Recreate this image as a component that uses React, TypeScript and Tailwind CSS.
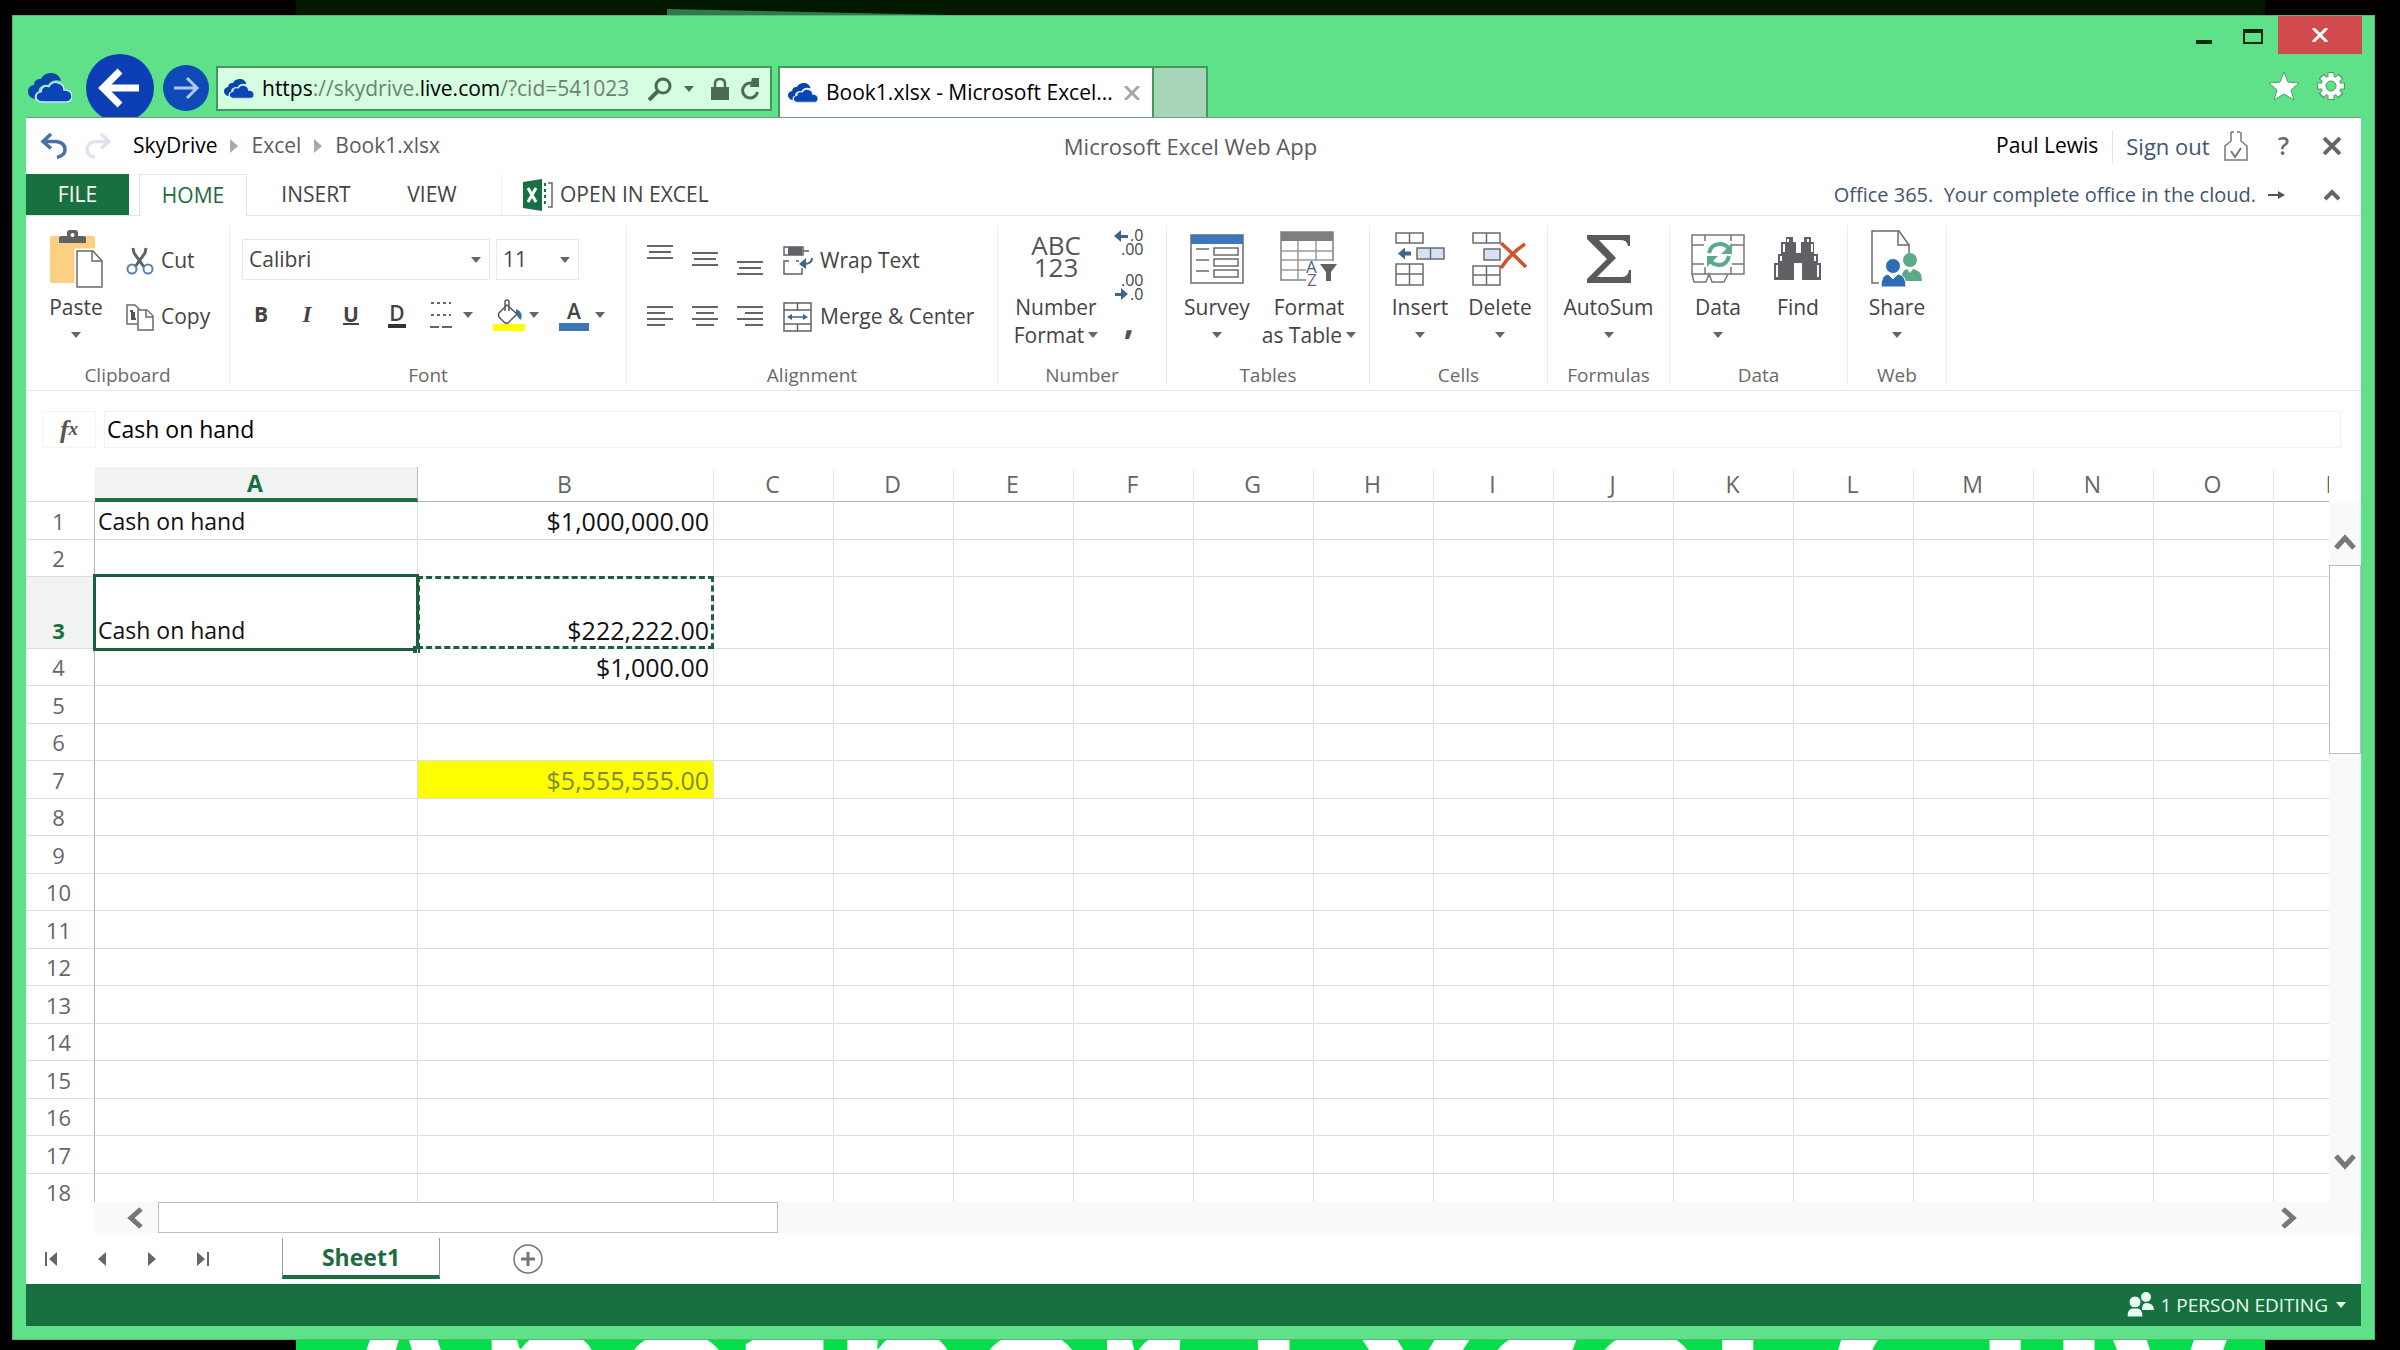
import { useState } from "react";
import type { ReactNode } from "react";

type IconProps = { className?: string };

const COLUMNS = ["A", "B", "C", "D", "E", "F", "G", "H", "I", "J", "K", "L", "M", "N", "O", "P"];
const ROWS = Array.from({ length: 18 }, (_, i) => i + 1);

const CELLS: Record<string, string> = {
  A1: "Cash on hand",
  B1: "$1,000,000.00",
  A3: "Cash on hand",
  B3: "$222,222.00",
  B4: "$1,000.00",
  B7: "$5,555,555.00",
};

function rowHeight(row: number) {
  if (row === 3) return "h-[72px]";
  return row === 1 || (row > 3 && row % 2 === 1) ? "h-[38px]" : "h-[37px]";
}

function columnWidth(column: string) {
  if (column === "A") return "w-[323px]";
  if (column === "B") return "w-[296px]";
  return "w-[120px]";
}

/* ---------- icons ---------- */

function CloudIcon({ className }: IconProps) {
  return (
    <svg viewBox="0 0 44 30" preserveAspectRatio="none" className={className}>
      <path
        d="M7 26C2 25 0 22 0 18.500C0 15 2 12.500 6 12C6 8 9 5.500 13 6C15 2 19 0 23 0C28 0 32 3 33 8C28 6 22 8 20 12C14 11 10 15 10.500 19C7 20 6 23 7 26Z"
        fill="#0a45a8"
      />
      <path
        d="M15 29C10.500 29 8 27 8 24C8 21 10 19 13 18.700C13 14 17 12 21 13.500C23 9.500 27 8.500 31 10C34 11 36 14 36 17C41 17 44 19.500 44 23.500C44 27 41 29 38 29Z"
        fill="#0a45b5"
        stroke="#c9e6ff"
        strokeWidth="1.500"
      />
    </svg>
  );
}

function Caret({ className = "text-[#666]" }: IconProps) {
  return (
    <svg viewBox="0 0 10 6" className={`h-[6px] w-[10px] shrink-0 ${className}`}>
      <path d="M0 0h10L5 6z" fill="currentColor" />
    </svg>
  );
}

function PasteIcon() {
  return (
    <svg viewBox="0 0 54 58" className="h-[58px] w-[54px]">
      <rect x="1" y="6" width="45" height="47" rx="2" fill="#fbd083" />
      <path d="M10 13V8q0-2 3-2h5V3q0-3 3-3h5q3 0 3 3v3h5q3 0 3 2v5z" fill="#5f6165" />
      <circle cx="23.500" cy="5" r="2" fill="#fff" />
      <path d="M28 21h17l8 10v26H28z" fill="#fff" stroke="#fff" strokeWidth="5" />
      <path d="M28 21h16l9 10v26H28z" fill="#fff" stroke="#6b6b6b" strokeWidth="1.500" />
      <path d="M43 21v10h10" fill="none" stroke="#6b6b6b" strokeWidth="1.500" />
    </svg>
  );
}

function CutIcon() {
  return (
    <svg viewBox="0 0 28 28" className="h-[28px] w-[28px]" fill="none">
      <path d="M7 1L8 6L18 20M20 1L19 6L9 20" stroke="#5f6165" strokeWidth="3" />
      <circle cx="6" cy="22" r="4.500" stroke="#5a80a8" strokeWidth="2" />
      <circle cx="22" cy="22" r="4.500" stroke="#5a80a8" strokeWidth="2" />
    </svg>
  );
}

function CopyIcon() {
  return (
    <svg viewBox="0 0 28 28" className="h-[28px] w-[28px]" fill="#fff" stroke="#6b6b6b" strokeWidth="1.500">
      <path d="M1 2h8l4 4v15H1z" />
      <path d="M4 8h2v8h4M8 9v6" stroke="#555" strokeWidth="2" />
      <path d="M12 7h9l6 6v14H12z" />
      <path d="M20 7v7h7" />
    </svg>
  );
}

function BordersIcon() {
  return (
    <svg viewBox="0 0 22 28" className="h-[28px] w-[22px]" fill="none" stroke="#666" strokeWidth="2">
      <path d="M1 2h20M1 14h20" strokeDasharray="3 3" />
      <path d="M0 26h9M12 26h10" />
    </svg>
  );
}

function FillIcon() {
  return (
    <svg viewBox="0 0 32 32" className="h-[32px] w-[32px]">
      <path d="M23 10q8 3 5 11q-3-2-5-6z" fill="#3d6fa8" />
      <path d="M14 6l10 9-9 9q-2 1-4-1l-5-5q-1-2 0-4z" fill="#fff" stroke="#555" strokeWidth="1.500" />
      <path d="M12 12V3q0-2 2-2t2 2v9" fill="none" stroke="#555" strokeWidth="1.500" />
      <rect x="0" y="25" width="32" height="7" fill="#ffff00" />
    </svg>
  );
}

function LinesIcon({ lines }: { lines: [number, number][] }) {
  return (
    <svg viewBox="0 0 26 22" className="h-[22px] w-[26px]" stroke="#666" strokeWidth="2">
      {lines.map(([from, to], i) => (
        <path key={i} d={`M${from} ${2 + i * 6}H${to}`} />
      ))}
    </svg>
  );
}

function WrapIcon() {
  return (
    <svg viewBox="0 0 30 30" className="h-[30px] w-[30px]" fill="none">
      <rect x="1" y="1" width="19" height="8" stroke="#5f6165" strokeWidth="1.500" />
      <rect x="5" y="1" width="14" height="8" fill="#5f6165" />
      <path d="M20 5h6" stroke="#5f6165" strokeWidth="1.500" />
      <path d="M6 15H1v13h18v-6M13 15h3" stroke="#5f6165" strokeWidth="1.500" />
      <path d="M29 12q0 6-8 6" stroke="#3f6688" strokeWidth="2" />
      <path d="M16 18l7-6v11z" fill="#3f6688" />
    </svg>
  );
}

function MergeIcon() {
  return (
    <svg viewBox="0 0 30 30" className="h-[30px] w-[30px]" fill="none" stroke="#5f6165" strokeWidth="1.500">
      <path d="M1 1h27v28H1zM1 8h27M1 22h27M14.500 1v7M14.500 22v7" />
      <path d="M6 15h17" stroke="#3f6688" />
      <path d="M4 15l5-3v6zM25 15l-5-3v6z" fill="#3f6688" stroke="none" />
    </svg>
  );
}

function DecimalIcon({ increase }: { increase: boolean }) {
  return (
    <svg
      viewBox="0 0 30 28"
      className="h-[28px] w-[30px] font-['Open_Sans',sans-serif] text-[16px]"
      fill="#444"
    >
      <text x="16" y={increase ? 12 : 27}>.0</text>
      <text x="7" y={increase ? 26 : 13}>.00</text>
      {increase ? (
        <path d="M0 7l7-6v5h7v3H7v4z" fill="#3f6688" />
      ) : (
        <path d="M14 21l-7-6v5H1v3h6v4z" fill="#3f6688" />
      )}
    </svg>
  );
}

function SurveyIcon() {
  return (
    <svg viewBox="0 0 54 50" className="h-[50px] w-[54px]" fill="#fff" stroke="#6b6b6b" strokeWidth="1.500">
      <rect x="1" y="1" width="52" height="48" />
      <rect x="1" y="1" width="52" height="9" fill="#3c76bd" stroke="none" />
      {[14, 25, 36].map((y) => (
        <g key={y}>
          <path d={`M6 ${y + 1}h13`} />
          <rect x="24" y={y} width="24" height="7" />
        </g>
      ))}
    </svg>
  );
}

function FormatTableIcon() {
  return (
    <svg viewBox="0 0 58 56" className="h-[56px] w-[58px]" fill="none">
      <path d="M1 1h52v48H1z" fill="#fff" stroke="#808080" strokeWidth="1.500" />
      <path d="M18 10v39M36 10v20M1 20h52M1 29h52M1 39h30" stroke="#9a9a9a" strokeWidth="1.500" />
      <path d="M1 1h52v9H1z" fill="#7f7f7f" />
      <path d="M26 30h32v26H26z" fill="#fff" />
      <path d="M40 33h17l-6 8v9h-5v-9z" fill="#5f6165" />
      <text x="26" y="42" className="font-['Open_Sans',sans-serif] text-[17px]" fill="#3f6688">A</text>
      <text x="27" y="55" className="font-['Open_Sans',sans-serif] text-[17px]" fill="#80608a">Z</text>
    </svg>
  );
}

function InsertCellsIcon() {
  return (
    <svg viewBox="0 0 50 54" className="h-[54px] w-[50px]" fill="#fff" stroke="#6b6b6b" strokeWidth="1.500">
      <path d="M1 1h27v10H1zM14.500 1v10" />
      <path d="M1 32h27v21H1zM14.500 32v21M1 42h27" />
      <path d="M22 16h27v11H22zM35.500 16v11" fill="#d5e2f5" />
      <path d="M3 21.500l7-6v4h6v4h-6v4z" fill="#3f6688" stroke="none" />
    </svg>
  );
}

function DeleteCellsIcon() {
  return (
    <svg viewBox="0 0 56 54" className="h-[54px] w-[56px]" fill="#fff" stroke="#6b6b6b" strokeWidth="1.500">
      <path d="M1 1h27v10H1zM14.500 1v10" />
      <path d="M1 34h27v19H1zM14.500 34v19M1 43h27" />
      <path d="M12 17h16v11H12z" fill="#d5e2f5" />
      <path d="M29 11q10 9 25 24M53 12Q38 22 29 36" fill="none" stroke="#d2512e" strokeWidth="3.500" />
    </svg>
  );
}

function SigmaIcon() {
  return (
    <svg viewBox="0 0 46 50" className="h-[50px] w-[46px]">
      <path d="M1 1h43v11h-2q-1-6-7-6H13l17 18L11 43h25q6 0 7-7h2v13H1v-4l20-20L1 5z" fill="#5a5a5c" />
    </svg>
  );
}

function DataIcon() {
  return (
    <svg viewBox="0 0 54 50" className="h-[50px] w-[54px]" fill="none" stroke="#777" strokeWidth="1.500">
      <path d="M1 1h52v39H1zM1 11h12M1 30h12M41 11h12M41 30h12M14 1v6M40 1v6M14 33v7M40 33v7" />
      <path d="M1 40l2 8h12l3-8 3 8h12l4-8" />
      <path d="M18 19q2-9 11-9 6 0 9 5M38 22q-2 9-10 9-6 0-9-5" stroke="#5ea98a" strokeWidth="4" />
      <path d="M41 9v11H30zM16 33V22h11z" fill="#5ea98a" stroke="none" />
    </svg>
  );
}

function FindIcon() {
  return (
    <svg viewBox="0 0 50 46" className="h-[46px] w-[50px]" fill="#5f6165">
      <path d="M13 1h7v5h3v11h5V6h3V1h7v5h3v12h4v9h3v17H29V27h-8v17H1V27h4v-9h3V6h5z" />
      <path d="M4 29v12M8 20v5M45 29v12M42 20v5M11 8v8M39 8v8M15 3v3M35 3v3" stroke="#fff" strokeWidth="2" />
    </svg>
  );
}

function ShareIcon() {
  return (
    <svg viewBox="0 0 52 58" className="h-[58px] w-[52px]">
      <path d="M8 53H1V1h27l10 14v8" fill="#fff" stroke="#6b6b6b" strokeWidth="1.500" />
      <path d="M27 1v14h11" fill="none" stroke="#6b6b6b" strokeWidth="1.500" />
      <circle cx="39" cy="30" r="7" fill="#5ea98a" />
      <path d="M31 51q-1-11 5-12l3 4 3-4q9 1 9 12z" fill="#5ea98a" />
      <circle cx="22" cy="36" r="7.500" fill="#2f6cb5" stroke="#fff" />
      <path d="M10 57q0-12 7-13l5 5 5-5q8 1 8 13z" fill="#2f6cb5" stroke="#fff" />
    </svg>
  );
}

function Chevron({ className = "" }: IconProps) {
  return (
    <svg viewBox="0 0 22 16" className={`h-[16px] w-[22px] ${className}`} fill="none">
      <path d="M2 14l9-10 9 10" stroke="#777" strokeWidth="5" />
    </svg>
  );
}

function PeopleIcon() {
  return (
    <svg viewBox="0 0 28 26" className="h-[26px] w-[28px]" fill="#e6fff0">
      <circle cx="19" cy="5" r="5" />
      <path d="M15 18q0-7 4-7 8 0 8 7z" />
      <circle cx="8" cy="10" r="6" stroke="#187040" />
      <path d="M0 25q0-8 5-9h6q5 1 5 9z" stroke="#187040" />
    </svg>
  );
}

/* ---------- browser chrome ---------- */

function TitleBar() {
  return (
    <header className="flex h-[101px] flex-col pr-3 pl-[13px]">
      <div className="flex h-[38px] items-start justify-end">
        <button aria-label="Minimize" className="flex h-[28px] w-[48px] items-end justify-center">
          <span className="h-[4px] w-[16px] bg-[#062b0c]" />
        </button>
        <button aria-label="Maximize" className="flex h-[28px] w-[50px] items-end justify-center">
          <span className="h-[15px] w-[20px] border-2 border-t-4 border-[#062b0c]" />
        </button>
        <button aria-label="Close" className="flex h-[38px] w-[84px] items-center justify-center bg-[#d14b4d]">
          <svg viewBox="0 0 16 14" className="h-[14px] w-[16px]" stroke="#fff" strokeWidth="3">
            <path d="M1 0l14 14M15 0L1 14" />
          </svg>
        </button>
      </div>
      <div className="flex flex-1 items-end">
        <div className="h-[63px] overflow-hidden">
          <div className="flex h-[68px] items-center">
            <CloudIcon className="ml-[2px] h-[30px] w-[44px]" />
            <button aria-label="Back" className="ml-[14px] h-[68px] w-[68px] shrink-0">
              <svg viewBox="0 0 68 68" className="h-full w-full">
                <circle cx="34" cy="34" r="34" fill="#0b3fb3" />
                <path d="M53 34H18M34 17L17 34l17 17" fill="none" stroke="#fff" strokeWidth="7" />
              </svg>
            </button>
            <button aria-label="Forward" className="ml-2 h-[48px] w-[48px] shrink-0">
              <svg viewBox="0 0 48 48" className="h-full w-full">
                <circle cx="24" cy="24" r="23" fill="#0f49b5" />
                <path d="M12 24h23M25 14l10 10-10 10" fill="none" stroke="#a9c8f5" strokeWidth="3" />
              </svg>
            </button>
          </div>
        </div>
        <div className="mb-[6px] ml-[6px] flex h-[45px] w-[556px] items-center border-2 border-[#45985c] bg-[#d5fde0] px-[6px]">
          <CloudIcon className="h-[20px] w-[30px]" />
          <span className="ml-2 flex-1 text-[21px] whitespace-nowrap text-[#6d8273]">
            <span className="text-black">https</span>://skydrive.<span className="text-black">live.com</span>
            /?cid=541023
          </span>
          <button aria-label="Search" className="ml-2">
            <svg viewBox="0 0 24 24" className="h-[24px] w-[24px]" fill="none" stroke="#4c6b54" strokeWidth="3">
              <circle cx="15" cy="9" r="7" />
              <path d="M10 14L1 23" strokeWidth="4" />
            </svg>
          </button>
          <button aria-label="Show address list" className="ml-3">
            <Caret className="text-[#4c6b54]" />
          </button>
          <svg viewBox="0 0 20 22" className="ml-[16px] h-[22px] w-[20px]">
            <path d="M5 10V6q0-5 5-5t5 5v4" fill="none" stroke="#4c6b54" strokeWidth="2.500" />
            <rect x="1" y="9" width="18" height="13" fill="#4c6b54" />
          </svg>
          <button aria-label="Refresh" className="mr-1 ml-[10px]">
            <svg viewBox="0 0 20 22" className="h-[22px] w-[20px]">
              <path d="M13 5.500A7.500 7.500 0 1 0 17.500 14" fill="none" stroke="#4c6b54" strokeWidth="3" />
              <path d="M12 0h7v9h-9z" fill="#4c6b54" />
            </svg>
          </button>
        </div>
        <div className="ml-[6px] flex h-[51px] w-[376px] items-center border-2 border-b-0 border-[#45985c] bg-white px-2">
          <CloudIcon className="h-[20px] w-[30px]" />
          <span className="ml-2 flex-1 text-[21px] whitespace-nowrap text-black">Book1.xlsx - Microsoft Excel...</span>
          <button aria-label="Close tab" className="mr-1">
            <svg viewBox="0 0 16 14" className="h-[14px] w-[16px]" stroke="#aaa3a8" strokeWidth="3">
              <path d="M1 0l14 14M15 0L1 14" />
            </svg>
          </button>
        </div>
        <button aria-label="New tab" className="h-[51px] w-[54px] border-2 border-b-0 border-l-0 border-[#45985c] bg-[#a6d5b7]" />
        <div className="mr-4 ml-auto flex h-[62px] items-center gap-4">
          <button aria-label="Favorites">
            <svg viewBox="0 0 32 30" className="h-[30px] w-[32px]">
              <path d="M16 1l4 10 11 1-8 7 3 10-10-6-10 6 3-10-8-7 11-1z" fill="#fff" stroke="#4e9c66" />
            </svg>
          </button>
          <button aria-label="Tools">
            <svg viewBox="0 0 30 30" className="h-[30px] w-[30px]">
              <g stroke="#4e9c66" strokeWidth="7">
                <path d="M15 1v28M1 15h28M5 5l20 20M25 5L5 25" />
              </g>
              <g stroke="#fff" strokeWidth="5">
                <path d="M15 2v26M2 15h26M6 6l18 18M24 6L6 24" />
              </g>
              <circle cx="15" cy="15" r="7" fill="#5ee188" stroke="#fff" strokeWidth="5" />
              <circle cx="15" cy="15" r="5" fill="#5ee188" stroke="#4e9c66" />
            </svg>
          </button>
        </div>
      </div>
    </header>
  );
}

function Breadcrumbs() {
  return (
    <div className="flex h-[56px] items-center pl-[14px] text-[21px] text-[#5c5c5c]">
      <div className="flex flex-1 items-center">
        <button aria-label="Undo">
          <svg viewBox="0 0 28 26" className="h-[26px] w-[28px]" fill="none" stroke="#4a6fa5" strokeWidth="3.500">
            <path d="M11 1L3 8.500l8 7M4 8.500h12q9 1 9 8 0 6-8 8" />
          </svg>
        </button>
        <button aria-label="Redo" className="ml-4">
          <svg viewBox="0 0 28 26" className="h-[26px] w-[28px]" fill="none" stroke="#dfe3ef" strokeWidth="3.500">
            <path d="M17 1l8 7.500-8 7M24 8.500H12q-9 1-9 8 0 6 8 8" />
          </svg>
        </button>
        <nav className="ml-[21px] flex items-center gap-[13px]">
          <a href="#skydrive" className="text-black">SkyDrive</a>
          <svg viewBox="0 0 8 14" className="h-[14px] w-[8px]" fill="#aaa"><path d="M0 0l8 7-8 7z" /></svg>
          <a href="#excel">Excel</a>
          <svg viewBox="0 0 8 14" className="h-[14px] w-[8px]" fill="#aaa"><path d="M0 0l8 7-8 7z" /></svg>
          <a href="#book">Book1.xlsx</a>
        </nav>
      </div>
      <h1 className="text-[22px]">Microsoft Excel Web App</h1>
      <div className="flex flex-1 items-center justify-end pr-5">
        <span className="text-black">Paul Lewis</span>
        <a href="#signout" className="ml-[14px] border-l border-[#e3e3e3] pl-[13px] text-[22px] text-[#44546f]">Sign out</a>
        <svg viewBox="0 0 24 30" className="ml-[14px] h-[30px] w-[24px]" fill="none" stroke="#777" strokeWidth="1.500">
          <path d="M7 1v9l-6 5v14h22V15l-6-5V1" />
          <path d="M7 1h10" strokeDasharray="3 3" />
          <path d="M7 20l4 6 6-9" strokeWidth="2" />
        </svg>
        <button aria-label="Help" className="ml-[30px] text-[25px] font-semibold text-[#6b6b6b]">?</button>
        <button aria-label="Close workbook" className="ml-[34px]">
          <svg viewBox="0 0 18 18" className="h-[18px] w-[18px]" stroke="#666" strokeWidth="4">
            <path d="M1 1l16 16M17 1L1 17" />
          </svg>
        </button>
      </div>
    </div>
  );
}

function RibbonTabs() {
  return (
    <div className="flex h-[42px] items-stretch border-b border-[#e4e4e4] text-[21px] text-[#444]">
      <button className="w-[103px] bg-[#187040] pt-px text-white">FILE</button>
      <button className="-mb-px ml-[10px] w-[108px] border border-b-0 border-[#e4e4e4] bg-white text-[#1d6b41]">HOME</button>
      <button className="w-[138px] pt-px">INSERT</button>
      <button className="w-[94px] pt-px">VIEW</button>
      <button className="ml-[22px] flex items-center border-l border-[#ededed] pt-px pl-[21px]">
        <svg viewBox="0 0 32 32" className="mr-[5px] h-[32px] w-[32px]">
          <path d="M0 3l19-3v32L0 29z" fill="#187040" />
          <path d="M5 9l8 14M13 9L5 23" stroke="#fff" strokeWidth="3" />
          <path d="M22 4v24" stroke="#187040" strokeWidth="2" strokeDasharray="3 3" />
          <path d="M25 4h4v24h-4" fill="none" stroke="#666" strokeWidth="1.500" />
        </svg>
        OPEN IN EXCEL
      </button>
      <a href="#office365" className="ml-auto self-center text-[20px] whitespace-pre text-[#44546f]">
        {"Office 365.  Your complete office in the cloud."}
      </a>
      <svg viewBox="0 0 18 10" className="ml-3 h-[10px] w-[18px] self-center" fill="#555">
        <path d="M0 4h10V1l7 4-7 4V6H0z" />
      </svg>
      <button aria-label="Collapse ribbon" className="mr-[21px] ml-[38px]">
        <svg viewBox="0 0 16 12" className="h-[12px] w-[16px]" fill="none">
          <path d="M1 10l7-7 7 7" stroke="#666" strokeWidth="4" />
        </svg>
      </button>
    </div>
  );
}

/* ---------- ribbon ---------- */

function RibbonGroup({ label, className, children }: { label: string; className: string; children: ReactNode }) {
  return (
    <section className={`flex h-[160px] shrink-0 flex-col border-r border-[#ececec] ${className}`}>
      <div className="flex flex-1">{children}</div>
      <h2 className="text-center text-[19px] leading-[20px] text-[#6a6a6a]">{label}</h2>
    </section>
  );
}

type BigButtonProps = {
  icon: ReactNode;
  label: string;
  secondLine?: string;
  menu?: boolean;
  className?: string;
};

function BigButton({ icon, label, secondLine, menu = true, className = "w-[80px]" }: BigButtonProps) {
  return (
    <button className={`flex h-[124px] shrink-0 flex-col items-center text-[21px] leading-[28px] text-[#444] ${className}`}>
      <span className="flex h-[68px] items-center">{icon}</span>
      <span>{label}</span>
      <span className="flex h-[28px] items-center gap-1 whitespace-nowrap">
        {secondLine}
        {menu && <Caret />}
      </span>
    </button>
  );
}

function SmallButton({ icon, label }: { icon: ReactNode; label: string }) {
  return (
    <button className="flex h-[56px] items-center gap-[7px] text-[21px] whitespace-nowrap text-[#444]">
      {icon}
      {label}
    </button>
  );
}

function RibbonSelect({ label, options, className }: { label: string; options: string[]; className: string }) {
  return (
    <div className={`relative h-[41px] border border-[#e8e8e8] ${className}`}>
      <select aria-label={label} className="h-full w-full appearance-none bg-transparent pl-[6px] text-[21px] text-[#444]">
        {options.map((o) => (
          <option key={o}>{o}</option>
        ))}
      </select>
      <span className="pointer-events-none absolute inset-y-0 right-[8px] flex items-center">
        <Caret />
      </span>
    </div>
  );
}

const FULL: [number, number] = [0, 26];

function Ribbon() {
  return (
    <div className="flex h-[175px] border-b border-[#e8e8e8] pt-[9px]">
      <RibbonGroup label="Clipboard" className="w-[204px]">
        <BigButton icon={<PasteIcon />} label="Paste" className="ml-[14px] w-[72px]" />
        <div className="mt-2 ml-[14px]">
          <SmallButton icon={<CutIcon />} label="Cut" />
          <SmallButton icon={<CopyIcon />} label="Copy" />
        </div>
      </RibbonGroup>

      <RibbonGroup label="Font" className="w-[397px]">
        <div className="ml-3 flex flex-col pt-[14px]">
          <div className="flex gap-[6px]">
            <RibbonSelect label="Font name" options={["Calibri", "Arial"]} className="w-[248px]" />
            <RibbonSelect label="Font size" options={["11", "12"]} className="w-[83px]" />
          </div>
          <div className="mt-[13px] flex h-[44px] items-center text-[21px] text-[#444]">
            <button aria-label="Bold" className="w-[38px] font-bold">B</button>
            <button aria-label="Italic" className="ml-2 w-[38px] font-['Liberation_Serif',serif] text-[23px] font-bold italic">I</button>
            <button aria-label="Underline" className="ml-1 w-[42px] font-bold underline decoration-2">U</button>
            <button aria-label="Double underline" className="ml-1 flex w-[42px] justify-center">
              <span className="border-b-4 border-[#333] px-px leading-[22px] font-semibold">D</span>
            </button>
            <button aria-label="Borders" className="ml-3 flex items-center gap-[11px]">
              <BordersIcon />
              <Caret />
            </button>
            <button aria-label="Fill color" className="ml-[20px] flex items-center gap-1">
              <FillIcon />
              <Caret />
            </button>
            <button aria-label="Font color" className="ml-[20px] flex items-center gap-[6px]">
              <span className="w-[30px] border-b-8 border-[#3c76b5] leading-[24px] font-semibold">A</span>
              <Caret />
            </button>
          </div>
        </div>
      </RibbonGroup>

      <RibbonGroup label="Alignment" className="w-[371px]">
        <div className="ml-5 flex flex-col pt-[7px]">
          <div className="flex h-[56px] gap-[19px]">
            <button aria-label="Top align" className="self-start pt-[12px]"><LinesIcon lines={[FULL, [2, 24], FULL]} /></button>
            <button aria-label="Middle align" className="pt-[4px]"><LinesIcon lines={[FULL, [2, 24], FULL]} /></button>
            <button aria-label="Bottom align" className="self-end pb-[6px]"><LinesIcon lines={[FULL, [2, 24], FULL]} /></button>
          </div>
          <div className="flex h-[56px] items-center gap-[19px]">
            <button aria-label="Align left"><LinesIcon lines={[FULL, [0, 18], FULL, [0, 18]]} /></button>
            <button aria-label="Center"><LinesIcon lines={[FULL, [4, 22], FULL, [4, 22]]} /></button>
            <button aria-label="Align right"><LinesIcon lines={[FULL, [8, 26], FULL, [8, 26]]} /></button>
          </div>
        </div>
        <div className="ml-5 pt-2">
          <SmallButton icon={<WrapIcon />} label="Wrap Text" />
          <SmallButton icon={<MergeIcon />} label="Merge & Center" />
        </div>
      </RibbonGroup>

      <RibbonGroup label="Number" className="w-[169px]">
        <BigButton
          icon={
            <span className="flex flex-col pb-[6px] text-center text-[26px] leading-[22px] text-[#555]">
              <span>ABC</span>
              <span>123</span>
            </span>
          }
          label="Number"
          secondLine="Format"
          className="ml-[10px] w-[96px]"
        />
        <div className="ml-[10px] flex flex-col items-center pt-[4px]">
          <button aria-label="Increase decimal"><DecimalIcon increase /></button>
          <button aria-label="Decrease decimal" className="mt-[16px]"><DecimalIcon increase={false} /></button>
          <button aria-label="Comma style" className="mt-[6px] text-[36px] leading-[28px] font-bold text-[#555]">,</button>
        </div>
      </RibbonGroup>

      <RibbonGroup label="Tables" className="w-[203px]">
        <BigButton icon={<SurveyIcon />} label="Survey" className="ml-[10px] w-[80px]" />
        <BigButton icon={<FormatTableIcon />} label="Format" secondLine="as Table" className="w-[104px]" />
      </RibbonGroup>

      <RibbonGroup label="Cells" className="w-[178px]">
        <BigButton icon={<InsertCellsIcon />} label="Insert" className="ml-[10px] w-[80px]" />
        <BigButton icon={<DeleteCellsIcon />} label="Delete" />
      </RibbonGroup>

      <RibbonGroup label="Formulas" className="w-[122px]">
        <BigButton icon={<SigmaIcon />} label="AutoSum" className="w-full" />
      </RibbonGroup>

      <RibbonGroup label="Data" className="w-[178px]">
        <BigButton icon={<DataIcon />} label="Data" className="ml-[8px] w-[80px]" />
        <BigButton icon={<FindIcon />} label="Find" menu={false} />
      </RibbonGroup>

      <RibbonGroup label="Web" className="w-[99px]">
        <BigButton icon={<ShareIcon />} label="Share" className="w-full" />
      </RibbonGroup>
    </div>
  );
}

/* ---------- sheet ---------- */

function FormulaBar({ value, onChange }: { value: string; onChange: (value: string) => void }) {
  return (
    <div className="flex h-[76px] items-center gap-2 pr-[20px] pl-4 text-[23px]">
      <label
        htmlFor="formula"
        className="flex h-[37px] w-[54px] items-center justify-center border border-[#f4f4f4] font-['Liberation_Serif',serif] text-[26px] font-bold text-[#555] italic"
      >
        f<span className="text-[19px]">x</span>
      </label>
      <input
        id="formula"
        value={value}
        onChange={(e) => onChange(e.target.value)}
        className="h-[37px] flex-1 border border-[#f1f1f1] pl-[2px] text-black outline-none"
      />
    </div>
  );
}

function Cell({ id, value }: { id: string; value?: string }) {
  const base = "relative border-r border-b border-[#dedede] p-0 pr-1 pl-[3px] align-bottom leading-[36px] whitespace-nowrap";
  if (id === "A3") {
    return (
      <td className={base}>
        {value}
        <span className="absolute -inset-x-[2px] -inset-y-[3px] border-[3px] border-[#1c5f3d]" />
        <span className="absolute -right-[3px] -bottom-[5px] h-[7px] w-[7px] bg-[#1c5f3d]" />
      </td>
    );
  }
  if (id === "B3") {
    return (
      <td className={`${base} text-right text-[25px]`}>
        {value}
        <span className="absolute -inset-px border-[3px] border-dashed border-[#1c5f3d]" />
      </td>
    );
  }
  if (id === "B7") {
    return <td className={`${base} bg-[#ffff00] text-right text-[25px] text-[#7f8a3c]`}>{value}</td>;
  }
  return <td className={`${base} ${id.startsWith("B") ? "text-right text-[25px]" : ""}`}>{value}</td>;
}

function Sheet({ cells }: { cells: Record<string, string> }) {
  return (
    <div className="min-w-0 flex-1 overflow-hidden">
      <table className="w-[2368px] table-fixed border-separate border-spacing-0 text-[23px] text-[#111]">
        <thead>
          <tr className="h-[35px] text-[#666]">
            <th aria-label="Select all" className="w-[69px] border-b border-[#dedede] p-0" />
            {COLUMNS.map((column) => (
              <th
                key={column}
                scope="col"
                className={`p-0 pr-[2px] text-[23px] leading-[30px] ${columnWidth(column)} ${
                  column === "A"
                    ? "border-r border-b-4 border-r-[#bbb] border-b-[#187040] bg-[#f1f2f2] font-bold text-[#187040]"
                    : "border-r border-b border-r-[#ececec] border-b-[#b5b5b5] font-normal"
                }`}
              >
                {column}
              </th>
            ))}
          </tr>
        </thead>
        <tbody>
          {ROWS.map((row) => (
            <tr key={row} className={rowHeight(row)}>
              <th
                scope="row"
                className={`border-r border-b border-r-[#b5b5b5] border-b-[#dedede] p-0 pr-[3px] align-bottom text-[22px] leading-[36px] ${
                  row === 3 ? "bg-[#f1f2f2] font-bold text-[#187040]" : "font-normal text-[#666]"
                }`}
              >
                {row}
              </th>
              {COLUMNS.map((column) => (
                <Cell key={column} id={`${column}${row}`} value={cells[`${column}${row}`]} />
              ))}
            </tr>
          ))}
        </tbody>
      </table>
    </div>
  );
}

function VerticalScrollbar() {
  return (
    <div className="mt-[36px] flex w-[32px] shrink-0 flex-col items-center bg-[#f8f9f9]">
      <button aria-label="Scroll up" className="flex h-[62px] items-end pb-[15px]"><Chevron /></button>
      <div className="h-[189px] w-full border border-[#bdbdbd] bg-white" />
      <button aria-label="Scroll down" className="mt-auto flex h-[48px]"><Chevron className="rotate-180" /></button>
    </div>
  );
}

function HorizontalScrollbar() {
  return (
    <div className="ml-[69px] flex h-[31px] items-center bg-[#f9f9f9]">
      <button aria-label="Scroll left" className="flex w-[63px] justify-end pr-3"><Chevron className="-rotate-90" /></button>
      <div className="h-full w-[620px] border border-[#bdbdbd] bg-white" />
      <button aria-label="Scroll right" className="mr-[61px] ml-auto"><Chevron className="rotate-90" /></button>
    </div>
  );
}

function SheetTabs() {
  return (
    <div className="flex h-[51px] items-center pl-[19px]">
      <div className="flex items-center gap-[40px]">
        <button aria-label="First sheet">
          <svg viewBox="0 0 12 14" className="h-[14px] w-[12px]" fill="#666"><path d="M0 0h2v14H0zM12 0v14L4 7z" /></svg>
        </button>
        <button aria-label="Previous sheet">
          <svg viewBox="0 0 10 14" className="h-[14px] w-[10px]" fill="#666"><path d="M9 0v14L1 7z" /></svg>
        </button>
        <button aria-label="Next sheet">
          <svg viewBox="0 0 10 14" className="h-[14px] w-[10px]" fill="#666"><path d="M1 0v14l8-7z" /></svg>
        </button>
        <button aria-label="Last sheet">
          <svg viewBox="0 0 12 14" className="h-[14px] w-[12px]" fill="#666"><path d="M10 0h2v14h-2zM0 0v14l8-7z" /></svg>
        </button>
      </div>
      <button className="ml-[73px] h-[41px] w-[158px] border-x border-b-4 border-x-[#999] border-b-[#187040] text-[23px] leading-[36px] font-bold text-[#1d6b41]">
        Sheet1
      </button>
      <button aria-label="New sheet" className="ml-[73px]">
        <svg viewBox="0 0 30 30" className="h-[30px] w-[30px]" fill="none" stroke="#777">
          <circle cx="15" cy="15" r="14" strokeWidth="1.500" />
          <path d="M15 8v14M8 15h14" strokeWidth="3" />
        </svg>
      </button>
    </div>
  );
}

export default function App() {
  const [cells, setCells] = useState(CELLS);

  return (
    <div className="relative isolate flex h-screen flex-col overflow-hidden bg-black pt-[15px] pr-[25px] pb-[10px] pl-[12px] font-['Open_Sans',sans-serif]">
      {/* desktop behind the window: dark band on top, caption at the bottom */}
      <div className="absolute inset-y-0 right-[135px] left-[296px] -z-10 flex flex-col justify-between overflow-hidden bg-[#001900]">
        <svg viewBox="0 0 330 16" className="ml-[371px] h-[16px] w-[330px]">
          <path d="M0 9l330 7H0z" fill="#2f7a48" />
        </svg>
        <div className="flex h-[10px] justify-center bg-[#05dd4b]">
          <p className="-mt-[76px] shrink-0 text-[208px] leading-[208px] font-bold whitespace-nowrap text-white">
            Another Excel Guy
          </p>
        </div>
      </div>

      <main className="flex min-h-0 flex-1 flex-col border border-[#55b976] bg-[#5ee188]">
        <TitleBar />
        <div className="mr-[13px] mb-[13px] ml-[13px] flex min-h-0 flex-1 flex-col border-t border-[#6f9f7f] bg-white">
          <Breadcrumbs />
          <RibbonTabs />
          <Ribbon />
          <FormulaBar value={cells.A3} onChange={(value) => setCells({ ...cells, A3: value })} />
          <div className="flex min-h-0 flex-1">
            <Sheet cells={cells} />
            <VerticalScrollbar />
          </div>
          <HorizontalScrollbar />
          <SheetTabs />
          <footer className="flex h-[42px] items-center justify-end bg-[#187040] pr-[15px] text-[19px] text-[#e6fff0]">
            <button className="flex items-center">
              <PeopleIcon />
              <span className="mr-2 ml-[6px]">1 PERSON EDITING</span>
              <Caret className="text-[#e6fff0]" />
            </button>
          </footer>
        </div>
      </main>
    </div>
  );
}
